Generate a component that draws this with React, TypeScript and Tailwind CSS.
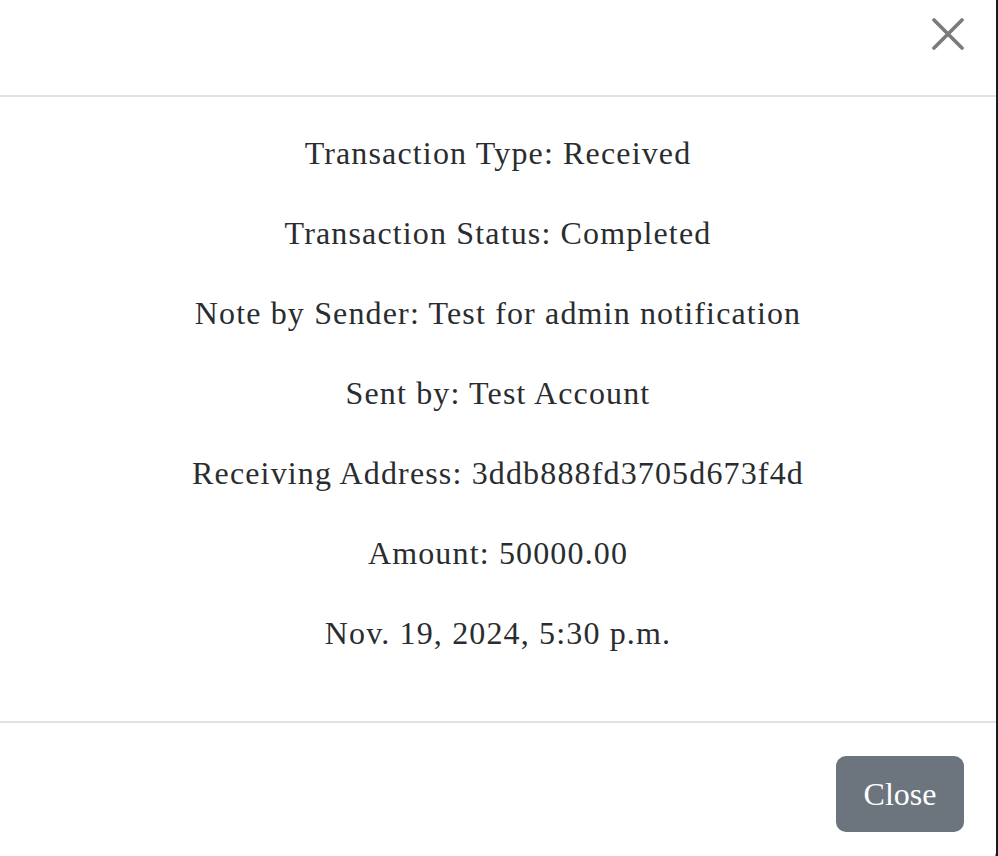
export default function App() {
  const rows = [
    "Transaction Type: Received",
    "Transaction Status: Completed",
    "Note by Sender: Test for admin notification",
    "Sent by: Test Account",
    "Receiving Address: 3ddb888fd3705d673f4d",
    "Amount: 50000.00",
    "Nov. 19, 2024, 5:30 p.m.",
  ];

  return (
    <div className="h-[856px] w-[998px] overflow-hidden bg-[#1a1a1a]">
      <div
        className="w-[996px] bg-white text-[#2a2d30] rounded-br-[12px]"
        style={{ fontFamily: '"Liberation Serif", "DejaVu Serif", serif' }}
      >
        {/* header */}
        <div className="flex h-[97px] items-start justify-end border-b-2 border-[#dee2e6] pr-[32px] pt-[18px]">
          <button type="button" aria-label="Close" className="h-[32px] w-[32px] text-[#7a7a7a]">
            <svg viewBox="0 0 32 32" className="h-[32px] w-[32px]" fill="none" stroke="currentColor" strokeWidth="3.6" strokeLinecap="round">
              <path d="M2 2 L30 30 M30 2 L2 30" />
            </svg>
          </button>
        </div>

        {/* body */}
        <div className="p-[32px] text-center text-[32px] leading-[48px] tracking-[1.15px]">
          {rows.map((r) => (
            <p key={r} className="mb-[32px]">
              {r}
            </p>
          ))}
        </div>

        {/* footer */}
        <div className="flex justify-end border-t-2 border-[#dee2e6] p-[24px] pt-[33px]">
          <button
            type="button"
            className="m-[8px] mt-0 h-[76px] w-[128px] rounded-[10px] bg-[#6c757d] text-[32px] leading-[48px] text-white"
          >
            Close
          </button>
        </div>
      </div>
    </div>
  );
}
